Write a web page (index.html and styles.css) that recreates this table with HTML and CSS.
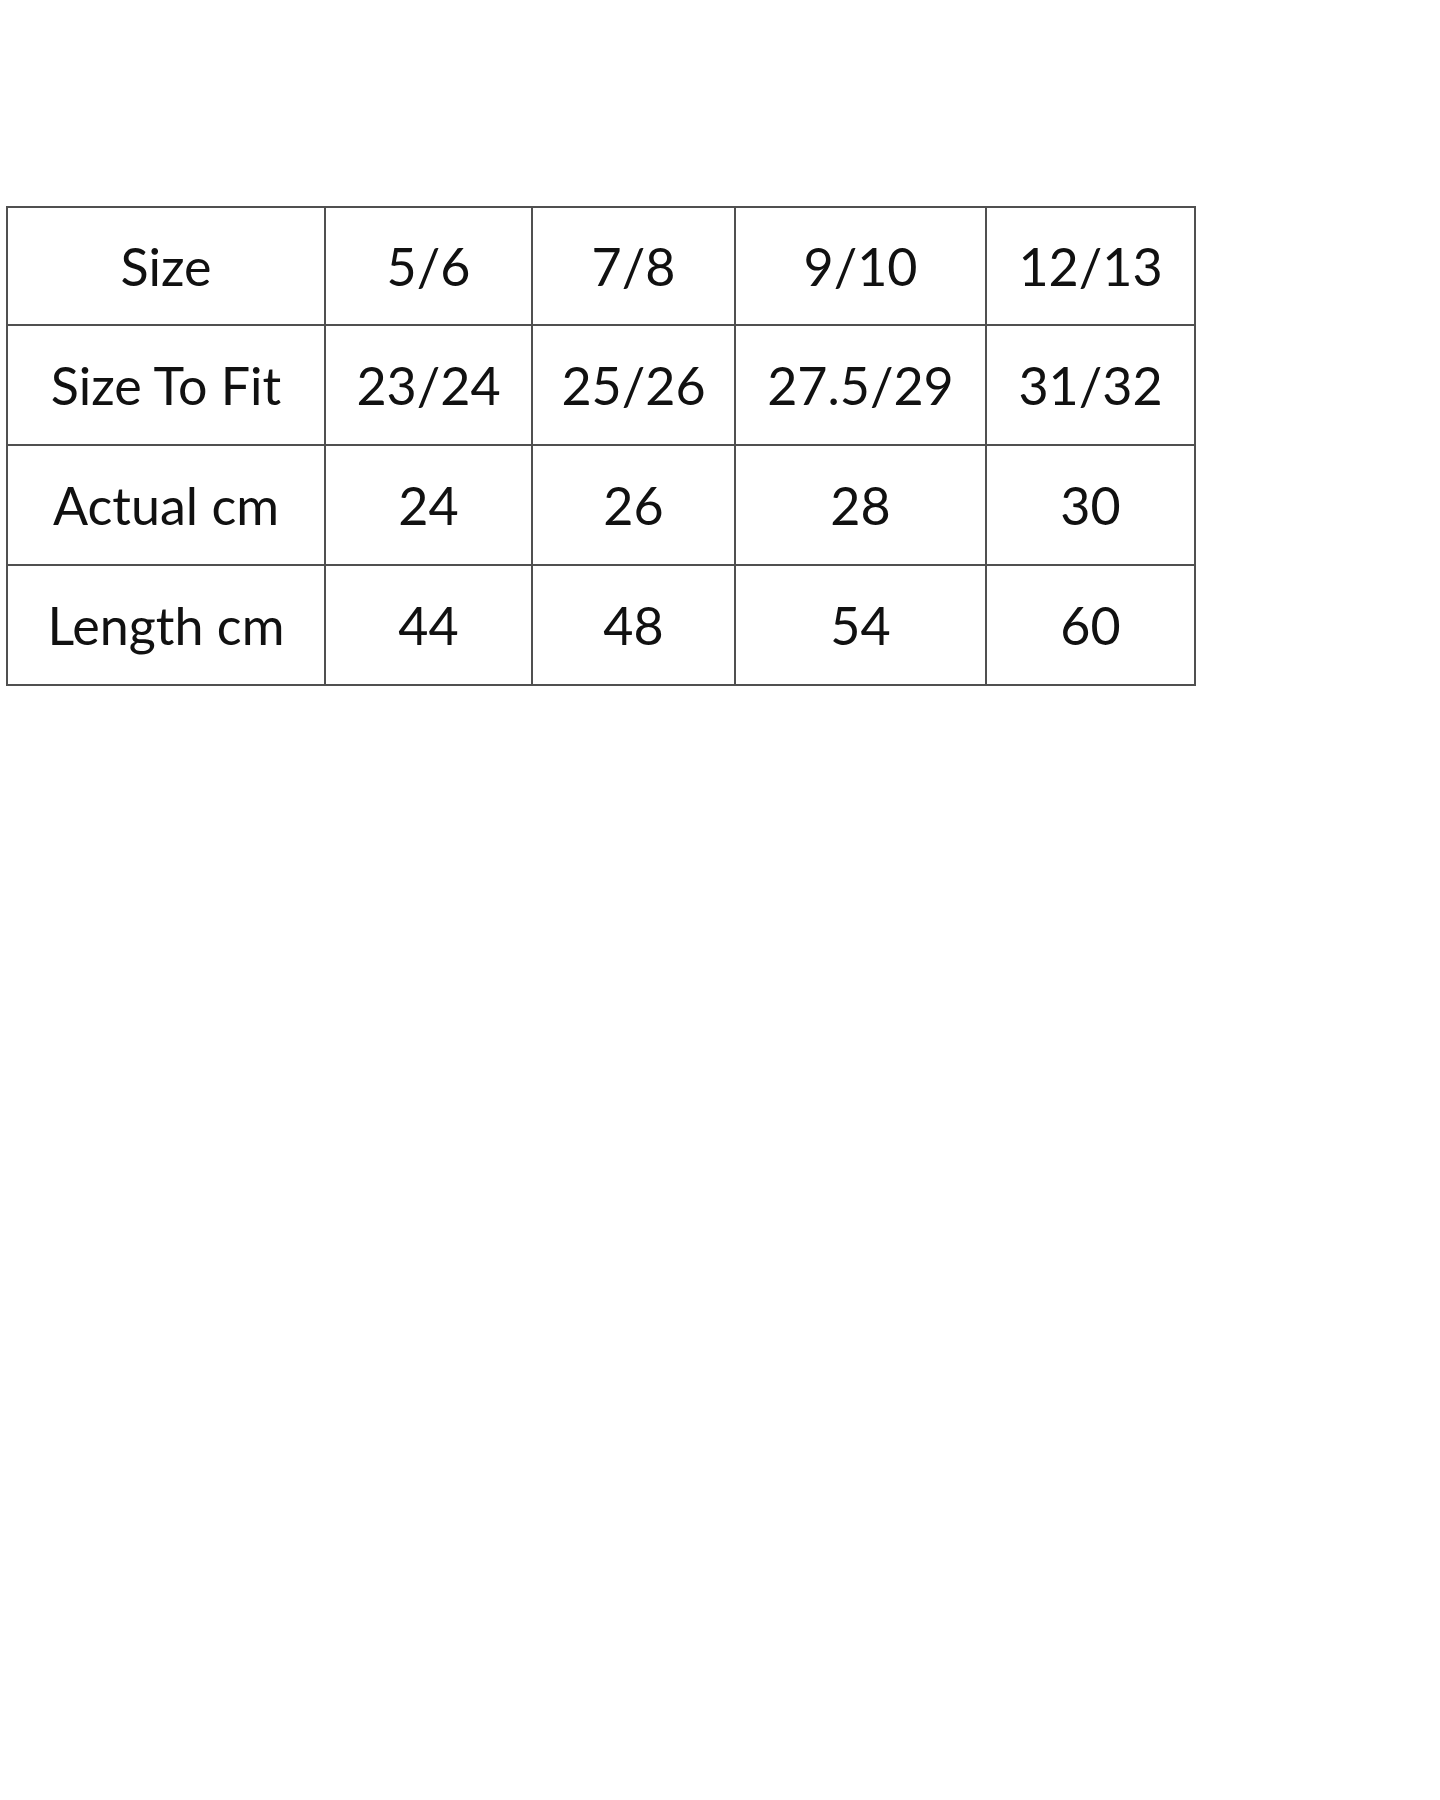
FILE: index.html
```html
<!DOCTYPE html>
<html>
<head>
<meta charset="utf-8">
<link rel="stylesheet" href="styles.css">
</head>
<body>
<table class="size-table">
  <colgroup>
    <col class="c1"><col class="c2"><col class="c3"><col class="c4"><col class="c5">
  </colgroup>
  <tr class="first"><td>Size</td><td>5/6</td><td>7/8</td><td>9/10</td><td>12/13</td></tr>
  <tr><td>Size To Fit</td><td>23/24</td><td>25/26</td><td>27.5/29</td><td>31/32</td></tr>
  <tr><td>Actual cm</td><td>24</td><td>26</td><td>28</td><td>30</td></tr>
  <tr><td>Length cm</td><td>44</td><td>48</td><td>54</td><td>60</td></tr>
</table>
</body>
</html>
```
FILE: styles.css
```css
html, body {
  margin: 0;
  padding: 0;
  background: #fff;
}
body {
  width: 1440px;
  height: 1800px;
  padding-top: 206px;
  padding-left: 6px;
  box-sizing: border-box;
}
.size-table {
  border-collapse: collapse;
  table-layout: fixed;
  width: 1188px;
  font-family: Lato, "Open Sans", sans-serif;
  font-size: 52px;
  color: #111;
}
.c1 { width: 318px; }
.c2 { width: 207px; }
.c3 { width: 203px; }
.c4 { width: 251px; }
.c5 { width: 209px; }
.size-table td {
  border: 2.5px solid #505050;
  height: 118px;
  padding: 0;
  text-align: center;
  vertical-align: middle;
  white-space: nowrap;
}
.size-table .first td {
  height: 116px;
}
```
